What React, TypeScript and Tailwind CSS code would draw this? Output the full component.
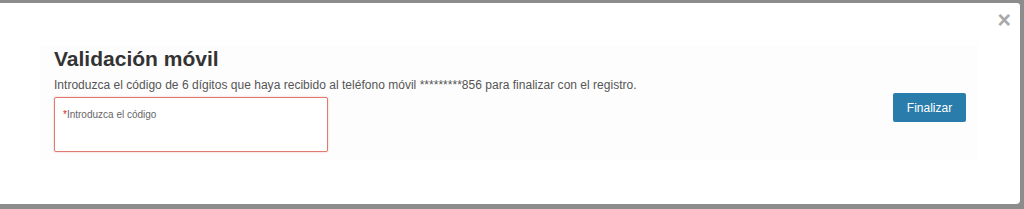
import React from "react";

export default function App() {
  return (
    <div
      className="w-[1024px] h-[209px] bg-[#8c8c8c] pt-[3px] pr-[4px] pb-[5px] overflow-hidden"
      style={{ fontFamily: '"Liberation Sans", Arial, sans-serif' }}
    >
      <div className="relative h-full bg-white rounded-br-[4px] rounded-tr-[3px] pt-[42px] pl-[40px] pr-[42px]">
        <button className="absolute right-[9px] top-[6px] text-[#a8a8a8] text-[23px] font-bold leading-none">
          ×
        </button>
        <div className="bg-[#fdfdfd] h-[115px] flex items-start pl-[14px] pr-[12px]">
          <div className="flex-1">
            <h2 className="text-[21px] font-bold text-[#333] leading-[24px] mt-[2px]">
              Validación móvil
            </h2>
            <p className="text-[12px] text-[#555] mt-[7px] leading-[14px] tracking-[0.02px]">
              Introduzca el código de 6 dígitos que haya recibido al teléfono móvil *********856 para finalizar con el registro.
            </p>
            <div className="mt-[5px] w-[274px] h-[55px] border border-[#e07a70] rounded-[2px] bg-white px-[8px] pt-[7px] leading-none shadow-[0_0_2px_rgba(224,122,112,0.5)]">
              <span className="text-[10px] text-[#666] leading-none">
                <span className="text-[#d9262b]">*</span>Introduzca el código
              </span>
            </div>
          </div>
          <button className="mt-[48px] w-[73px] h-[29px] bg-[#2a7cab] rounded-[2px] text-white text-[12px]">
            Finalizar
          </button>
        </div>
      </div>
    </div>
  );
}
